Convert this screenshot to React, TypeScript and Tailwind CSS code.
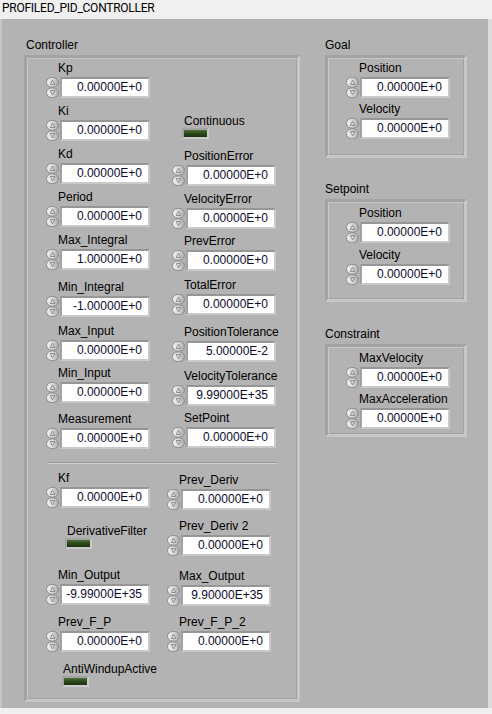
import React from "react";

const FONT = "font-['Liberation_Sans',Arial,sans-serif]";

function Spinner() {
  return (
    <svg width="13" height="21" viewBox="0 0 13 21" className="shrink-0">
      <defs>
        <linearGradient id="spin" x1="0" x2="1" y1="0" y2="0">
          <stop offset="0" stopColor="#f4f4f4" />
          <stop offset="0.6" stopColor="#d2d2d2" />
          <stop offset="1" stopColor="#a6a6a6" />
        </linearGradient>
      </defs>
      <rect x="0.5" y="0.5" width="12" height="9.5" rx="5" fill="url(#spin)" stroke="#8c8c8c" />
      <rect x="0.5" y="11" width="12" height="9.5" rx="5" fill="url(#spin)" stroke="#8c8c8c" />
      <path d="M4.2 7.5 L6.5 3.2 L8.8 7.5 Z" fill="none" stroke="#7c7c7c" strokeWidth="0.8" />
      <path d="M4.2 13.5 L6.5 17.8 L8.8 13.5 Z" fill="none" stroke="#7c7c7c" strokeWidth="0.8" />
    </svg>
  );
}

type NumProps = { label: string; value?: string; className?: string; pad?: string };

function Numeric({ label, value = "0.00000E+0", className = "", pad = "pl-[12px]" }: NumProps) {
  return (
    <div className={`flex flex-col ${className}`}>
      <div className={`h-[14px] whitespace-nowrap text-[12px] leading-[14px] text-black ${pad}`}>{label}</div>
      <div className="mt-[2px] flex h-[21px] items-center">
        <Spinner />
        <div className="ml-[1px] h-[21px] w-[90px] border-2 border-t-[#969696] border-l-[#a2a2a2] border-r-[#cacaca] border-b-[#cacaca] bg-white pr-[6px] text-right text-[12px] leading-[17px] text-[#0b0b2e]">
          {value}
        </div>
      </div>
    </div>
  );
}

function Led({ label, className = "", pad, ledPad }: { label: string; className?: string; pad: string; ledPad: string }) {
  return (
    <div className={`flex flex-col ${className}`}>
      <div className={`h-[14px] whitespace-nowrap text-[12px] leading-[14px] text-black ${pad}`}>{label}</div>
      <div className={ledPad}>
        <div className="h-[11px] w-[27px] border-2 border-t-[#a3a3a3] border-l-[#a3a3a3] border-r-[#cbcbcb] border-b-[#cbcbcb] bg-[linear-gradient(180deg,#52703c_0%,#2c4a1a_45%,#1b330e_100%)]" />
      </div>
    </div>
  );
}

function Frame({ children, className = "" }: { children: React.ReactNode; className?: string }) {
  return (
    <div className={`border-[3px] border-t-[#a3a3a3] border-l-[#a3a3a3] border-r-[#c7c7c7] border-b-[#c7c7c7] ${className}`}>
      <div className="h-full border border-t-[#c7c7c7] border-l-[#c7c7c7] border-r-[#a3a3a3] border-b-[#a3a3a3]">{children}</div>
    </div>
  );
}

function Group({ title, className = "", children }: { title: string; className?: string; children: React.ReactNode }) {
  return (
    <div className={`flex flex-col ${className}`}>
      <div className="h-[14px] text-[12px] leading-[14px] text-black">{title}</div>
      {children}
    </div>
  );
}

export default function App() {
  return (
    <div className={`flex h-[714px] w-[492px] flex-col bg-[#f0f0f0] ${FONT}`}>
      <div className="h-[19px] pl-[2px] font-['Roboto',Arial,sans-serif] text-[12px] leading-[17px] tracking-[-0.25px] text-black">
        PROFILED_PID_CONTROLLER
      </div>

      <div className="flex h-[689px] border-l-[2px] border-r-[4px] border-l-[#c6c6c6] border-r-[#dcdcdc] bg-[#b3b3b3] pl-[22px] pt-[19px]">
        {/* Controller cluster */}
        <div className="flex flex-col">
          <div className="h-[14px] pl-[2px] text-[12px] leading-[14px] text-black">Controller</div>
          <Frame className="mt-[3px] h-[647px] w-[276px]">
            <div className="flex pl-[18px]">
              <div className="flex w-[126px] flex-col">
                <Numeric label="Kp" className="mt-[2px]" />
                <Numeric label="Ki" className="mt-[6px]" />
                <Numeric label="Kd" className="mt-[6px]" />
                <Numeric label="Period" className="mt-[6px]" />
                <Numeric label="Max_Integral" value="1.00000E+0" className="mt-[6px]" />
                <Numeric label="Min_Integral" value="-1.00000E+0" className="mt-[10px]" />
                <Numeric label="Max_Input" className="mt-[7px]" />
                <Numeric label="Min_Input" className="mt-[5px]" />
                <Numeric label="Measurement" className="mt-[9px]" />
              </div>
              <div className="flex flex-col">
                <Led label="Continuous" className="mt-[55px]" pad="pl-[12px]" ledPad="pl-[10px]" />
                <Numeric label="PositionError" className="mt-[10px]" />
                <Numeric label="VelocityError" className="mt-[6px]" />
                <Numeric label="PrevError" className="mt-[5px]" />
                <Numeric label="TotalError" className="mt-[7px]" />
                <Numeric label="PositionTolerance" value="5.00000E-2" className="mt-[10px]" />
                <Numeric label="VelocityTolerance" value="9.99000E+35" className="mt-[7px]" />
                <Numeric label="SetPoint" className="mt-[5px]" />
              </div>
            </div>

            <div className="ml-[20px] mt-[13px] h-[2px] w-[230px] border-t border-b border-t-[#9a9a9a] border-b-[#d0d0d0]" />

            <div className="flex pl-[18px]">
              <div className="flex w-[121px] flex-col">
                <Numeric label="Kf" className="mt-[7px]" />
                <Led label="DerivativeFilter" className="mt-[16px]" pad="pl-[21px]" ledPad="pl-[19px]" />
                <Numeric label="Min_Output" value="-9.99000E+35" className="mt-[19px]" />
                <Numeric label="Prev_F_P" className="mt-[10px]" />
                <Led label="AntiWindupActive" className="mt-[10px]" pad="pl-[17px]" ledPad="pl-[16px]" />
              </div>
              <div className="flex flex-col">
                <Numeric label="Prev_Deriv" className="mt-[9px]" />
                <Numeric label="Prev_Deriv 2" className="mt-[9px]" />
                <Numeric label="Max_Output" value="9.90000E+35" className="mt-[13px]" />
                <Numeric label="Prev_F_P_2" className="mt-[9px]" />
              </div>
            </div>
          </Frame>
        </div>

        {/* Right side clusters */}
        <div className="ml-[25px] flex flex-col">
          <Group title="Goal">
            <Frame className="mt-[3px] h-[103px] w-[142px]">
              <div className="flex flex-col pl-[17px]">
                <Numeric label="Position" className="mt-[2px]" pad="pl-[13px]" />
                <Numeric label="Velocity" className="mt-[4px]" pad="pl-[13px]" />
              </div>
            </Frame>
          </Group>
          <Group title="Setpoint" className="mt-[24px]">
            <Frame className="mt-[3px] h-[103px] w-[142px]">
              <div className="flex flex-col pl-[17px]">
                <Numeric label="Position" className="mt-[3px]" pad="pl-[13px]" />
                <Numeric label="Velocity" className="mt-[5px]" pad="pl-[13px]" />
              </div>
            </Frame>
          </Group>
          <Group title="Constraint" className="mt-[25px]">
            <Frame className="mt-[3px] h-[93px] w-[142px]">
              <div className="flex flex-col pl-[17px]">
                <Numeric label="MaxVelocity" className="mt-[3px]" pad="pl-[13px]" />
                <Numeric label="MaxAcceleration" className="mt-[4px]" pad="pl-[13px]" />
              </div>
            </Frame>
          </Group>
        </div>
      </div>
    </div>
  );
}
